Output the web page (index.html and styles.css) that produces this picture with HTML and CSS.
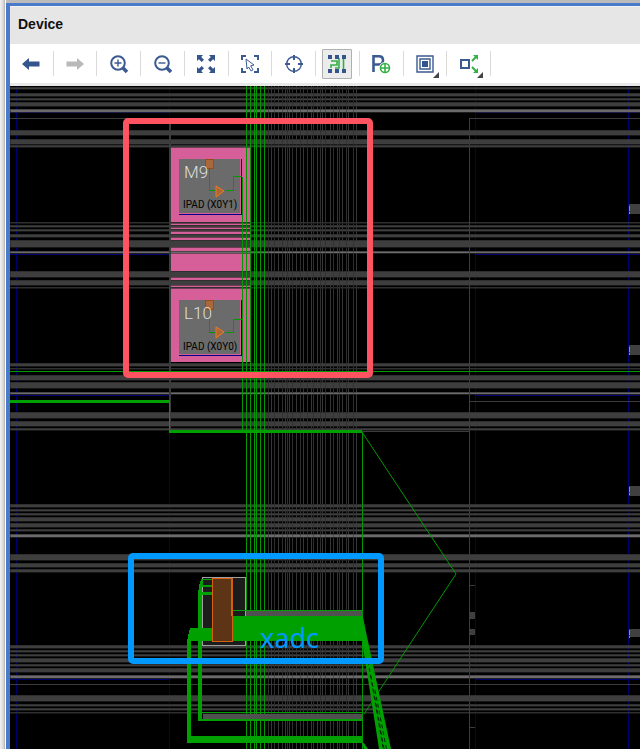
FILE: index.html
```html
<!DOCTYPE html>
<html lang="en">
<head>
<meta charset="utf-8">
<title>Device</title>
<link rel="stylesheet" href="styles.css">
</head>
<body>
<main class="window">
<header class="title-bar"><h1>Device</h1></header>
<div class="toolbar" role="toolbar" aria-label="Device view">
  <div class="tool"><button aria-label="Back"><svg viewBox="0 0 18 18"><path class="solid" d="M0 9 7 3v3.500h10.500v5H7V15z"/></svg></button></div>
  <div class="tool"><button aria-label="Forward" disabled><svg viewBox="0 0 18 18"><path class="muted" d="M18 9 11 3v3.500H.500v5H11V15z"/></svg></button></div>
  <div class="tool"><button aria-label="Zoom in"><svg viewBox="0 0 18 18"><circle class="line" cx="8" cy="8" r="6.800"/><path class="line thin" d="M8 4.500v7M4.500 8h7"/><path class="line heavy" d="m13 13 4 4"/></svg></button></div>
  <div class="tool"><button aria-label="Zoom out"><svg viewBox="0 0 18 18"><circle class="line" cx="8" cy="8" r="6.800"/><path class="line thin" d="M4.500 8h7"/><path class="line heavy" d="m13 13 4 4"/></svg></button></div>
  <div class="tool"><button aria-label="Fit"><svg viewBox="0 0 18 18"><path class="solid" d="M0 0h6L4.200 1.900 7 4.700 4.700 7 1.900 4.200 0 6zM18 0v6l-1.900-1.800L13.300 7 11 4.700l2.800-2.800L12 0zM0 18v-6l1.900 1.800L4.700 11 7 13.300l-2.800 2.800L6 18zM18 18h-6l1.800-1.900-2.800-2.800 2.300-2.300 2.800 2.800L18 12z"/></svg></button></div>
  <div class="tool"><button aria-label="Select area"><svg viewBox="0 0 18 18"><path class="line" d="M1 5V1h4M13 1h4v4M17 13v4h-4M5 17H1v-4"/><path class="line slim" d="m5 4 8 6-3.300.800 2.300 4-2 1.200-2.400-4L6 14z"/></svg></button></div>
  <div class="tool"><button aria-label="Center"><svg viewBox="0 0 18 18"><circle class="line thin" cx="9" cy="9" r="7.300"/><path class="line" d="M9 0v5M9 13v5M0 9h5M13 9h5"/></svg></button></div>
  <div class="tool"><button class="active" aria-label="Routing resources" aria-pressed="true"><svg viewBox="0 0 18 18"><path class="wire" d="M3 6h6v4H3v3M7 13h4V3M15.500 4v11"/><path class="solid" d="M0 0h4v4H0zM7 0h4v4H7zM14 0h4v4h-4zM0 14h4v4H0zM7 14h4v4H7zM14 14h4v4h-4z"/></svg></button></div>
  <div class="tool"><button aria-label="Add Pblock"><svg viewBox="0 0 18 18"><path class="line bold" d="M1.500 17V1.200H7q4 0 4 4T7 9.500H2"/><circle cx="13" cy="13" r="6" fill="#fff"/><circle class="wire" cx="13" cy="13" r="4.500"/><path class="wire" d="M13 8.500v9M8.500 13h9"/></svg></button></div>
  <div class="tool"><button aria-label="Layers"><svg viewBox="0 0 18 18"><path class="line thin" d="M1 1h16v16H1zM4 4h10v10H4z"/><path class="solid" d="M6 6h6v6H6z"/></svg><span class="more"></span></button></div>
  <div class="tool"><button aria-label="Expand cell"><svg viewBox="0 0 18 18"><path class="line" d="M1 5h8v8H1z"/><path class="wire dash" d="m12 6 4-4M12 12l4 4"/><path class="green" d="M13 0h5v5zM18 13v5h-5z"/></svg><span class="more"></span></button></div>
</div>
<svg class="device" role="img" aria-label="Device floorplan">
<defs>
  <g id="pad">
    <path fill="#6b6b6b" d="M179 159h61v54h-61z"/>
    <path class="site-edge" d="M241 159v55H179"/>
    <path class="pin" d="M205.500 159.500h8v9h-8z"/>
  </g>
  <path id="buffer" class="buffer" d="m216 186 8 5-8 6z"/>
</defs>
<g transform="translate(-10 -86)" shape-rendering="crispEdges">
  <g class="grid-blue">
    <path d="M16.500 86v2000M169.500 86v30M169.500 432v2000M475.500 86v2000M628.500 86v2000"/>
    <path d="M10 112.500h160M475 112.500h2000M10 254.500h160M475 254.500h2000M10 395.500h160M475 395.500h2000M10 679.500h160M475 679.500h2000"/>
  </g>
  <path class="columns" d="M268.500 86v2000M271.500 86v2000M274.500 86v2000M278.500 86v2000M282.500 86v2000M285.500 86v2000M287.500 86v2000M289.500 86v2000M292.500 86v2000M296.500 86v2000M300.500 86v2000M303.500 86v2000M307.500 86v2000M311.500 86v2000M313.500 86v2000M317.500 86v2000M320.500 86v2000M322.500 86v2000M325.500 86v2000M330.500 86v2000M333.500 86v2000M337.500 86v2000M339.500 86v2000M342.500 86v2000M346.500 86v2000M348.500 86v2000M353.500 86v2000M356.500 86v2000"/>
  <path class="pblock" d="M171 147h79v215h-79z"/>
  <g class="tracks">
    <rect x="10" y="87" width="100%" height="2"/><rect x="10" y="93" width="100%" height="3"/><rect x="10" y="98" width="100%" height="2"/><rect x="10" y="102" width="100%" height="4"/>
    <rect x="10" y="130" width="100%" height="5"/><rect x="10" y="139" width="100%" height="5"/><rect x="10" y="145" width="100%" height="2"/>
    <rect x="10" y="222" width="100%" height="1"/><rect x="10" y="225" width="100%" height="2"/><rect x="10" y="229" width="100%" height="2"/><rect x="10" y="234" width="100%" height="3"/><rect x="10" y="240" width="100%" height="7"/>
    <rect x="10" y="271" width="100%" height="6"/><rect x="10" y="280" width="100%" height="5"/><rect x="10" y="287" width="100%" height="1"/>
    <rect x="10" y="363" width="100%" height="3"/><rect x="10" y="368" width="100%" height="1"/><rect x="10" y="375" width="100%" height="5"/><rect x="10" y="382" width="100%" height="6"/>
    <rect x="10" y="412" width="100%" height="6"/><rect x="10" y="421" width="100%" height="5"/><rect x="10" y="428" width="100%" height="2"/>
    <rect x="10" y="504" width="100%" height="3"/><rect x="10" y="509" width="100%" height="2"/><rect x="10" y="513" width="100%" height="2"/><rect x="10" y="517" width="100%" height="4"/><rect x="10" y="523" width="100%" height="4"/><rect x="10" y="529" width="100%" height="2"/>
    <rect x="10" y="554" width="100%" height="6"/><rect x="10" y="563" width="100%" height="4"/><rect x="10" y="569" width="100%" height="3"/>
    <rect x="10" y="645" width="100%" height="3"/><rect x="10" y="650" width="100%" height="2"/><rect x="10" y="654" width="100%" height="2"/><rect x="10" y="658" width="100%" height="4"/><rect x="10" y="664" width="100%" height="2"/><rect x="10" y="668" width="100%" height="4"/>
    <rect x="10" y="695" width="100%" height="6"/><rect x="10" y="704" width="100%" height="2"/><rect x="10" y="708" width="100%" height="2"/><rect x="10" y="712" width="100%" height="1"/>
  </g>
  <g class="spines">
    <rect x="10" y="109" width="100%" height="3"/><rect x="10" y="251" width="100%" height="2"/><rect x="10" y="392" width="100%" height="2"/><rect x="10" y="534" width="100%" height="3"/><rect x="10" y="675" width="100%" height="3"/>
  </g>
  <path class="columns faint" d="M268.500 86v2000M274.500 86v2000M282.500 86v2000M287.500 86v2000M292.500 86v2000M300.500 86v2000M307.500 86v2000M313.500 86v2000M320.500 86v2000M325.500 86v2000M333.500 86v2000M339.500 86v2000M346.500 86v2000M353.500 86v2000"/>
  <path fill="#3c3c3c" d="M169 118h2v284h-2z"/>
  <path class="outline" d="M170.500 402v28M10 118.500h160M2000 118.500H469.500v2000M469 401.500h2000M362 431.500h108M10 684.500h2000M469 585.500h6M469 727.500h6"/>
  <path fill="#404040" d="M469 612h6v7h-6zM469 629h6v6h-6zM629 204h12v10h-12zM629 345h12v10h-12zM629 486h12v10h-12zM629 629h12v8h-12z"/>
  <path class="ticks" d="M629.500 206v8M629.500 347v8M629.500 487v8M629.500 630v8"/>

  <use href="#pad"/>
  <use href="#pad" y="141"/>

  <path class="net" d="M242.500 177v255M246.500 86v2000M250.500 86v2000M254.500 86v2000M256.500 86v2000M260.500 86v2000M264.500 86v2000M362.500 432v2000M169.500 402v29"/>
  <path class="net" d="M10 371.500h2000"/>
  <path class="route" d="M10 400h160v3H10zM169 430h193v3H169z"/>
  <path class="net" d="M209.500 169v21.500h6M225 190.500h8v-14h9M209.500 310v22.500h6M225 332.500h8v-13h9"/>

  <path fill="#1c1c1c" stroke="#a0a0a0" d="M202.500 577.500h43v68h-43z"/>
  <path fill="#505050" d="M246 611h116v5H246zM203 714h159v5H203z"/>
  <path class="route" d="M231 610h131v1H231zM231 616h131v25H231zM198 712h164v1H198zM201 579h11v1h-11zM201 585h11v2h-11zM201 592h11v3h-11z"/>
  <path class="route" d="M201 579h2v6h-1v134h160v2H198V594l1-8zM190 628h22v13h-21v95h171v7H187V641z"/>
  <path fill="#5e3416" stroke="#d45f10" d="M212.500 578.500h20v63h-20z"/>
  <path stroke="#d45f10" d="M231.500 578v38"/>
</g>
<g transform="translate(-10 -86)">
  <use href="#buffer"/>
  <use href="#buffer" y="141"/>
  <path class="net" d="m362 432 94 142-92 140"/>
  <path class="route" d="m362 612 4 20 25 117 8 38h-14l-6-38-17-108zM362 743h2l4 6v12z"/>
  <path class="streaks" d="m368 661 16 92M371 676l13 73M375 690l13 67"/>
  <g class="site-label"><text x="184" y="178">M9</text><text x="184" y="319">L10</text></g>
  <g class="pad-label"><text x="183" y="208">IPAD (X0Y1)</text><text x="183" y="350">IPAD (X0Y0)</text></g>
  <rect class="note red" x="126" y="121" width="244" height="254" rx="2"/>
  <rect class="note blue" x="131" y="556" width="250" height="105" rx="2"/>
  <text class="note-label" x="260" y="648">xadc</text>
</g>
</svg>
</main>
</body>
</html>
```
FILE: styles.css
```css
* { box-sizing: border-box; }

body {
  margin: 0;
  min-height: 100vh;
  display: flex;
  padding: 3px 0 0 6px;
  background: linear-gradient(90deg, #f0f0f0 0, #dcdcdc 3px, #b0b0b0 5px, #fff 5px, #fff 6px, #bbb 6px);
  font-family: "Liberation Sans", Arial, sans-serif;
}

.window {
  flex: 1;
  min-width: 0;
  display: flex;
  flex-direction: column;
  border-left: 4px solid #4a7bcb;
  border-top: 3px solid #4a7bcb;
  background: #fff;
  overflow: hidden;
}

.title-bar {
  height: 38px;
  padding: 0 8px;
  display: flex;
  align-items: center;
  background: #e6e6e6;
  border-top: 1px solid #f2f2f2;
}

.title-bar h1 {
  margin: 0;
  font-size: 14px;
  line-height: 20px;
  padding-bottom: 4px;
  color: #111;
}

.toolbar {
  height: 39px;
  display: grid;
  grid-template-columns: repeat(11, 1fr);
  max-width: 481px;
  align-items: center;
}

.tool {
  height: 25px;
  display: flex;
  align-items: center;
  justify-content: center;
  border-right: 1px solid #dadada;
}

.tool button {
  position: relative;
  flex: none;
  width: 30px;
  height: 30px;
  padding: 0;
  display: grid;
  place-items: center;
  border: 1px solid transparent;
  border-radius: 1px;
  background: none;
}

.tool button.active { background: #ececec; border-color: #b0b0b0; }
.tool svg { width: 18px; height: 18px; overflow: visible; }

.more {
  position: absolute;
  right: 0;
  bottom: 0;
  border-left: 6px solid transparent;
  border-bottom: 6px solid #444;
}

.solid { fill: #34548c; }
.muted { fill: #b9b9b9; }
.green { fill: #35b045; }
.line { fill: none; stroke: #3b5a90; stroke-width: 2; }
.thin { stroke-width: 1.4; }
.slim { stroke-width: 1; }
.bold { stroke-width: 2.6; }
.heavy { stroke-width: 3.5; }
.wire { fill: none; stroke: #35b045; stroke-width: 1.6; }
.dash { stroke-width: 2; }

.device {
  display: block;
  flex: 1;
  width: 100%;
  min-height: 400px;
  background: #000;
  border-top: 3px solid #e8e8e8;
}

.grid-blue { fill: none; stroke: #000070; }
.columns { fill: none; stroke: #363636; }
.faint { stroke: #222; opacity: 0.4; }
.pblock { fill: #d65f99; }
.tracks { fill: #3e3e3e; stroke: #262626; stroke-opacity: 0.6; }
.spines { fill: #6c6a6c; stroke: #303030; stroke-opacity: 0.6; }
.outline { fill: none; stroke: #3c3c3c; }
.ticks { fill: none; stroke: #909090; stroke-dasharray: 5 1 2; }
.site-edge { fill: none; stroke: #00008b; stroke-width: 1; }
.pin { fill: #a8683c; stroke: #9c4a14; stroke-width: 1; }
.buffer { fill: #a8683c; stroke: #f07818; stroke-width: 1; }
.net { fill: none; stroke: #009a00; }
.route { fill: #00a000; }
.streaks { fill: none; stroke: #002800; stroke-dasharray: 4 3; }

.site-label { font: 300 17px Roboto, "Liberation Sans", sans-serif; fill: #dedede; }
.pad-label { font: 10px Roboto, "Liberation Sans", sans-serif; fill: #000; }
.note { fill: none; stroke-width: 6; }
.red { stroke: #ff5361; }
.blue { stroke: #0099ff; }
.note-label { font: 27px "Noto Sans", sans-serif; fill: #0099ff; }
```
